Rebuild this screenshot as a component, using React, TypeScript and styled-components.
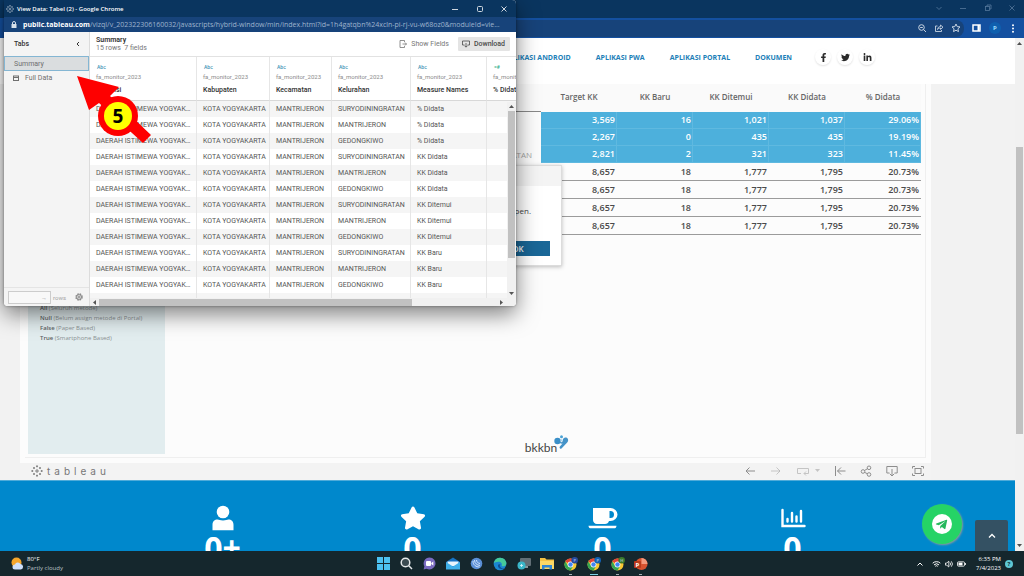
import React from "react";
import styled, { createGlobalStyle } from "styled-components";
import { FaFacebookF, FaTwitter, FaLinkedinIn, FaStar, FaTelegramPlane } from "react-icons/fa";

const Global = createGlobalStyle`
  * { box-sizing: border-box; }
  body { margin: 0; font-family: "Open Sans", "Noto Sans", sans-serif; }
  button, input { font: inherit; color: inherit; margin: 0; }
  button { border: 0; padding: 0; background: none; display: flex; align-items: center; justify-content: center; }
  a { color: inherit; text-decoration: none; }
  svg { display: block; flex: none; }
  table { border-collapse: separate; border-spacing: 0; table-layout: fixed; }
  td, th { padding: 0; }
`;

const Desktop = styled.div`
  position: relative;
  display: flex;
  flex-direction: column;
  height: 100vh;
  overflow: hidden;
  background: #f2f2f2;
`;

/* ---------- Main browser window ---------- */
const TitleBar = styled.header`
  display: flex;
  justify-content: flex-end;
  align-items: center;
  gap: 15px;
  height: 18px;
  padding: 0 8px 3px 0;
  background: #0a355f;
  color: #55789c;
`;
const ToolBar = styled.div`
  display: flex;
  align-items: center;
  height: 20px;
  padding: 1px 7px 1px 12px;
  gap: 8px;
  background: #1450a0;
  color: #fff;
`;
const Omnibox = styled.div`
  flex: 1;
  display: flex;
  justify-content: flex-end;
  align-items: center;
  gap: 7px;
  height: 17px;
  padding-right: 3px;
  border-radius: 8px;
  background: #17437a;
  color: #c8d4e2;
`;
const Profile = styled.button`
  width: 12px;
  height: 12px;
  border-radius: 50%;
  background: #0f5fae;
  color: #9fdcff;
  font-size: 6px;
  font-weight: 700;
`;
const Viewport = styled.div`
  flex: 1;
  min-height: 0;
  display: flex;
`;
const Page = styled.main`
  position: relative;
  flex: 1;
  min-width: 0;
  display: flex;
  flex-direction: column;
`;
const ScrollTrack = styled.div`
  display: flex;
  flex-direction: column;
  align-items: stretch;
  width: 9px;
  padding: 3px 1px;
  background: #f1f1f1;
  color: #505050;
  svg { align-self: center; }
`;
const Thumb = styled.div<{ $before: number; $size: number }>`
  flex: ${(p) => p.$size} 0 0;
  margin-top: ${(p) => p.$before}px;
  background: #c1c1c1;
`;
const Spring = styled.div<{ $grow?: number }>`
  flex: ${(p) => p.$grow ?? 1} 0 0;
`;
const Nav = styled.nav`
  display: flex;
  justify-content: flex-end;
  align-items: center;
  gap: 23px;
  height: 46px;
  padding: 0 140px 8px 0;
  background: #fff;
`;
const NavLinks = styled.div`
  display: flex;
  gap: 25px;
`;
const NavLink = styled.a`
  color: #1c80b8;
  font-size: 7px;
  font-weight: 700;
  white-space: nowrap;
`;
const Social = styled.div`
  display: flex;
  gap: 6px;
`;
const SocialLink = styled.a`
  display: flex;
  align-items: center;
  justify-content: center;
  width: 16px;
  height: 16px;
  border-radius: 50%;
  color: #2b2b2b;
  box-shadow: 0 1px 2px rgba(0, 0, 0, 0.12);
`;
const Embed = styled.section`
  flex: 1;
  min-height: 0;
  display: flex;
  flex-direction: column;
  margin: 0 84px 0 20px;
  background: #fcfcfc;
`;
const Dashboard = styled.div`
  flex: 1;
  min-height: 0;
  display: flex;
  margin: 0 5px 5px;
  padding: 0 4px 3px 3px;
  border: solid #efefef;
  border-width: 0 1px 1px 0;
`;
const FilterPanel = styled.aside`
  display: flex;
  flex-direction: column;
  justify-content: flex-end;
  width: 137px;
  padding: 0 0 111px 12px;
  background: #e2edef;
`;
const FilterLine = styled.p`
  margin: 0;
  height: 10px;
  line-height: 10px;
  font-size: 6px;
  color: #8a9193;
  white-space: nowrap;
  b { color: #5b6163; font-weight: 600; }
`;
const Sheet = styled.div`
  flex: 1;
  display: flex;
  flex-direction: column;
  align-items: center;
  justify-content: space-between;
`;
const Summary = styled.table`
  width: 100%;
  font-size: 9px;
  font-weight: 600;
  color: #4a4a4a;
  col { width: 76px; }
  col:first-child { width: auto; }
  thead th {
    height: 28px;
    padding-bottom: 3px;
    font-size: 8px;
    font-weight: 600;
    color: #666;
    background: #fafafa;
  }
  thead th:first-child { border-bottom: 1px solid #888; }
`;
const Name = styled.th`
  padding-right: 9px;
  font-size: 8px;
  font-weight: 400;
  color: #a5a5a5;
  text-align: right;
`;
const Value = styled.td<{ $marked?: boolean }>`
  height: ${(p) => (p.$marked ? 17 : 18)}px;
  line-height: 16px;
  padding-right: ${(p) => (p.$marked ? 1 : 2)}px;
  text-align: right;
  color: ${(p) => (p.$marked ? "#fff" : "inherit")};
  background: ${(p) => (p.$marked ? "#4db0dc" : "transparent")};
  border-style: solid;
  border-color: ${(p) => (p.$marked ? "#5fb9e0" : "#9b9b9b")};
  border-width: ${(p) => (p.$marked ? "0 1px 1px 0" : "0 0 1px 0")};
`;
const Logo = styled.div`
  display: flex;
  align-items: flex-end;
  margin-left: 8px;
  font-family: Lato, "Open Sans", sans-serif;
  font-size: 12px;
  line-height: 13px;
  color: #444;
  svg { margin: 0 0 5px -3px; }
`;
const VizBar = styled.footer`
  display: flex;
  align-items: center;
  justify-content: space-between;
  height: 17px;
  padding: 0 7px 2px 11px;
  background: #f3f3f3;
  color: #8d8d8d;
`;
const Wordmark = styled.a`
  display: flex;
  align-items: center;
  gap: 4px;
  font-family: Inter, "Open Sans", sans-serif;
  font-size: 10px;
  line-height: 14px;
  color: #777;
`;
const Letters = styled.span`
  display: flex;
  gap: 4px;
`;
const VizTools = styled.div`
  display: flex;
  align-items: center;
  gap: 14px;
`;
const Replay = styled.div`
  display: flex;
  gap: 5px;
  opacity: 0.45;
`;
const Stats = styled.section`
  display: flex;
  justify-content: center;
  height: 71px;
  overflow: hidden;
  background: #0088cc;
  border-top: 1px solid #4fabd9;
  color: #fff;
`;
const Stat = styled.div`
  display: flex;
  flex-direction: column;
  align-items: center;
  width: 190px;
  padding-top: 24px;
  font-size: 32px;
  font-weight: 700;
  line-height: 34px;
`;
const Telegram = styled.a`
  position: absolute;
  right: 53px;
  bottom: 7px;
  display: flex;
  align-items: center;
  justify-content: center;
  width: 40px;
  height: 40px;
  border-radius: 50%;
  background: #25d366;
  box-shadow: 1px 1px 2px #8a9a9a;
`;
const Disc = styled.span`
  display: flex;
  align-items: center;
  justify-content: center;
  width: 20px;
  height: 20px;
  padding-right: 1px;
  border-radius: 50%;
  background: #fff;
  color: #25b85c;
`;
const ToTop = styled.button`
  position: absolute;
  right: 7px;
  bottom: 0;
  width: 33px;
  height: 31px;
  border-radius: 2px 2px 0 0;
  background: #345163;
  color: #fff;
`;

/* ---------- Export dialog behind the popup ---------- */
const Dialog = styled.section`
  position: absolute;
  left: 400px;
  top: 165px;
  width: 162px;
  background: #fff;
  border: 1px solid #dcdcdc;
  box-shadow: 0 1px 4px rgba(0, 0, 0, 0.25);
  color: #444;
  font-size: 8px;
`;
const DialogHead = styled.div`
  height: 20px;
  background: #f4f4f4;
`;
const DialogText = styled.p`
  margin: 0;
  padding: 19px 30px 24px 0;
  line-height: 12px;
  text-align: right;
`;
const DialogOk = styled.button`
  width: 64px;
  height: 15px;
  margin: 0 11px 9px auto;
  background: #1a6797;
  color: #fff;
  font-weight: 600;
`;

/* ---------- View Data popup window ---------- */
const Popup = styled.section`
  position: absolute;
  left: 4px;
  top: 0;
  width: 512px;
  overflow: hidden;
  border-radius: 0 4px 4px 4px;
  background: #fff;
  color: #555;
  font-size: 7px;
`;
const PopupShadow = styled.div`
  position: absolute;
  left: 4px;
  top: 0;
  width: 512px;
  height: 306px;
  border-radius: 4px;
  box-shadow: 0 8px 22px rgba(0, 0, 0, 0.5), 0 0 3px rgba(0, 0, 0, 0.4);
`;
const PopupTitle = styled.header`
  display: flex;
  align-items: center;
  gap: 3px;
  height: 17px;
  padding: 0 9px 0 2px;
  background: #0a355f;
  color: #fff;
  font-size: 6px;
  font-weight: 600;
  svg { opacity: 0.8; }
`;
const WindowControls = styled.div`
  display: flex;
  gap: 17px;
  margin-left: auto;
`;
const PopupUrl = styled.div`
  display: flex;
  align-items: center;
  gap: 6px;
  height: 15px;
  padding: 0 7px;
  background: #17437a;
  color: #9fb4cd;
  white-space: nowrap;
  b { color: #fff; font-weight: 700; }
`;
const PopupBody = styled.div`
  display: grid;
  grid-template: minmax(0, 1fr) / 86px minmax(0, 1fr);
  height: 274px;
  font-family: Roboto, "Open Sans", sans-serif;
`;
const Tabs = styled.aside`
  display: flex;
  flex-direction: column;
  background: #f4f4f4;
  border-right: 1px solid #dcdcdc;
`;
const TabsHead = styled.div`
  display: flex;
  align-items: center;
  justify-content: space-between;
  height: 24px;
  padding: 0 8px 0 10px;
  font-weight: 500;
  color: #333;
`;
const Tab = styled.button<{ $active?: boolean }>`
  justify-content: flex-start;
  gap: 6px;
  height: ${(p) => (p.$active ? 15 : 14)}px;
  padding-left: 9px;
  color: #6f6f6f;
  background: ${(p) => (p.$active ? "#dadddf" : "transparent")};
  border: ${(p) => (p.$active ? "1px solid #84b6d3" : "0")};
`;
const RowsBar = styled.div`
  display: flex;
  align-items: center;
  height: 19px;
  margin-top: auto;
  padding: 0 6px 0 4px;
  border-top: 1px solid #e4e4e4;
  font-size: 6px;
  color: #a5a5a5;
  label { display: flex; align-items: center; gap: 2px; }
  svg { margin-left: auto; }
`;
const RowsInput = styled.input`
  width: 43px;
  height: 13px;
  padding: 0 3px;
  border: 1px solid #ccc;
  background: #f8f8f8;
  text-align: right;
  &::placeholder { color: #999; opacity: 1; }
`;
const DataPane = styled.div`
  position: relative;
  display: flex;
  flex-direction: column;
  min-width: 0;
`;
const PaneHead = styled.div`
  display: flex;
  align-items: center;
  gap: 4px;
  height: 25px;
  padding: 0 6px;
  border-bottom: 1px solid #e2e2e2;
`;
const Heading = styled.div`
  flex: 1;
  line-height: 8px;
  color: #777;
  strong { display: block; font-weight: 600; color: #333; }
`;
const PaneButton = styled.button<{ $filled?: boolean }>`
  gap: 4px;
  height: 14px;
  padding: 0 5px 0 4px;
  border-radius: 1px;
  font-weight: ${(p) => (p.$filled ? 500 : 400)};
  color: ${(p) => (p.$filled ? "#4a4a4a" : "#777")};
  background: ${(p) => (p.$filled ? "#e4e4e4" : "transparent")};
`;
const TableClip = styled.div`
  flex: 1;
  min-height: 0;
  overflow: hidden;
`;
const Data = styled.table`
  width: 100%;
  th, td {
    padding-left: 6px;
    border-right: 1px solid #e6e6e6;
    text-align: left;
    white-space: nowrap;
    overflow: hidden;
  }
  th {
    height: 44px;
    line-height: 10px;
    font-weight: 500;
    color: #333;
    border-bottom: 1px solid #d8d8d8;
  }
  td { height: 16px; line-height: 14px; text-overflow: ellipsis; }
  td:first-child { padding-right: 4px; }
  tbody tr:nth-child(odd) { background: #f5f5f5; }
  th:last-child, td:last-child { border-right: 0; }
`;
const FieldType = styled.span<{ $measure?: boolean }>`
  display: block;
  height: 10px;
  padding-left: 1px;
  font-size: 5px;
  font-weight: 500;
  color: ${(p) => (p.$measure ? "#2fae8a" : "#3f93b5")};
`;
const Source = styled.span`
  display: block;
  height: 13px;
  font-size: 6px;
  font-weight: 400;
  color: #8c8c8c;
`;
const VScroll = styled.div`
  position: absolute;
  top: 70px;
  right: 0;
  bottom: 8px;
  display: flex;
  flex-direction: column;
  align-items: center;
  width: 9px;
  padding: 2px 1px;
  background: #f1f1f1;
  color: #555;
`;
const VThumb = styled.div`
  width: 7px;
  height: 147px;
  margin: 2px 0 auto;
  background: #c1c1c1;
`;
const HScroll = styled.div`
  display: flex;
  align-items: center;
  height: 8px;
  padding: 0 12px 0 2px;
  background: #f1f1f1;
  color: #555;
`;
const HThumb = styled.div`
  width: 313px;
  height: 7px;
  margin: 0 auto 0 2px;
  background: #c1c1c1;
`;
const Callout = styled.svg`
  position: absolute;
  left: 74px;
  top: 73px;
`;

/* ---------- Taskbar ---------- */
const Taskbar = styled.footer`
  display: grid;
  grid-template-columns: 1fr 272px 1fr;
  align-items: center;
  height: 25px;
  padding: 0 11px;
  background: #15272d;
  color: #fff;
  font-size: 6px;
  line-height: 9px;
`;
const Weather = styled.button`
  justify-self: start;
  gap: 3px;
  text-align: left;
  span { color: #b9c3c6; }
`;
const Apps = styled.div`
  display: flex;
  justify-content: space-between;
`;
const TaskApp = styled.button<{ $line?: "dot" | "bar" }>`
  position: relative;
  width: 14px;
  height: 22px;
  &::after {
    content: "";
    position: absolute;
    bottom: 0;
    width: ${(p) => (p.$line === "bar" ? 8 : p.$line ? 3 : 0)}px;
    height: 1px;
    background: ${(p) => (p.$line === "bar" ? "#7fd0e6" : "#a4b0b4")};
  }
`;
const Tray = styled.div`
  display: flex;
  align-items: center;
  justify-content: flex-end;
  gap: 4px;
`;
const Clock = styled.div`
  margin-left: 6px;
  text-align: right;
`;
const Help = styled.span`
  width: 8px;
  height: 8px;
  border-radius: 50%;
  background: #5fc7d3;
  color: #10343a;
  font-weight: 700;
  line-height: 8px;
  text-align: center;
`;

type IcoProps = { w: number; h?: number; sw?: number; children: React.ReactNode };
const Ico = ({ w, h = w, sw = 1, children }: IcoProps) => (
  <svg width={w} height={h} viewBox={`0 0 ${w} ${h}`} fill="none" stroke="currentColor" strokeWidth={sw} aria-hidden="true">
    {children}
  </svg>
);
const Tri = ({ d }: { d: string }) => (
  <svg width="5" height="5" viewBox="0 0 5 5" fill="currentColor" aria-hidden="true"><path d={d} /></svg>
);
const UP = "M0 4L2.5 1 5 4z";
const DOWN = "M0 1L2.5 4 5 1z";
const LEFT = "M4 0L1 2.5 4 5z";
const RIGHT = "M1 0L4 2.5 1 5z";

const Sparkle = ({ w }: { w: number }) => (
  <svg width={w} height={w} viewBox="0 0 12 12" stroke="currentColor" strokeWidth=".9" fill="none" aria-hidden="true">
    <path d="M6 4v4M4 6h4M6 .3v2M5 1.3h2M6 9.7v2M5 10.7h2M.3 6h2M1.3 5v2M9.7 6h2M10.7 5v2M3 2v2M2 3h2M9 2v2M8 3h2M3 8v2M2 9h2M9 8v2M8 9h2" />
  </svg>
);

const Chrome = ({ badge, letter }: { badge: string; letter: string }) => (
  <svg width="14" height="14" viewBox="0 0 14 14" aria-hidden="true">
    <circle cx="6.5" cy="7.5" r="6" fill="#f8c832" />
    <path d="M6.500 7.500L1.300 4.500A6 6 0 0 1 11.700 4.500L6.500 4.700z" fill="#e2443a" />
    <path d="M1.300 4.500A6 6 0 0 0 6.500 13.500L9 9.200 6.500 7.500 4 8.800z" fill="#35a653" />
    <circle cx="6.500" cy="7.500" r="2.900" fill="#fff" />
    <circle cx="6.500" cy="7.500" r="2.200" fill="#4285f4" />
    <circle cx="10.700" cy="3.300" r="3.300" fill={badge} />
    <text x="10.700" y="5" fontSize="4" textAnchor="middle" fill="#d9e8ff">{letter}</text>
  </svg>
);

const taskApps: { name: string; line?: "dot" | "bar"; icon: React.ReactNode }[] = [
  { name: "Start", icon: <svg width="13" height="13" viewBox="0 0 13 13" fill="#4cc2f1"><path d="M0 0h6v6H0zM7 0h6v6H7zM0 7h6v6H0zM7 7h6v6H7z" /></svg> },
  { name: "Search", icon: <svg width="13" height="13" viewBox="0 0 13 13" fill="#3c4c52" stroke="#e6e9ea" strokeWidth="1.500"><circle cx="5.500" cy="5.500" r="4.300" /><path d="M8.800 8.800l3.200 3.200" /></svg> },
  { name: "Chat", icon: <svg width="13" height="13" viewBox="0 0 13 13"><path d="M6.500.5a6 6 0 1 1-3 11.200L.6 12.500l.8-3A6 6 0 0 1 6.500.5z" fill="#7a6bc0" /><rect x="3" y="4" width="5" height="5" rx="1" fill="#fff" /><path d="M8.300 6l2-1.500v4l-2-1.500z" fill="#fff" /></svg> },
  { name: "Mail", icon: <svg width="14" height="13" viewBox="0 0 14 13"><path d="M0 5l7-4.500L14 5v7H0z" fill="#1673c4" /><path d="M1.500 4.500h11V9h-11z" fill="#e9f5fd" /><path d="M0 5l7 4.500L14 5v7.500H0z" fill="#3fb0ea" /></svg> },
  { name: "Phone", icon: <svg width="13" height="13" viewBox="0 0 13 13"><circle cx="6.500" cy="6.500" r="5.800" fill="#5b8fd6" /><path d="M3 4c0 4 3 6 6.500 6M4.500 3c0 3.500 2.500 5 5.500 5.500M6.500 3c0 2 1.500 3.200 3.500 3.500" stroke="#dcebff" fill="none" strokeWidth=".9" /></svg> },
  { name: "Edge", icon: <svg width="14" height="14" viewBox="0 0 14 14"><circle cx="7" cy="7" r="6.300" fill="#1b86d0" /><path d="M.8 6.200C1.500 2.500 4 .7 7 .7c4 0 6.400 3 6.400 5.600 0 2-1.400 3-3 3-1.200 0-2-.4-1.700-1C9.500 6.500 8 4.700 5.600 4.700 3.300 4.700 1.300 5.500.8 6.200z" fill="#45c99a" /><path d="M5 8c-.5 2 1.500 4.300 4.500 4.200 1.200 0 2-.5 2.500-1-1.500.5-3.500.2-4.500-1C6.800 9.300 7 8 7.500 7.500 6.500 7 5.300 7 5 8z" fill="#0d4f96" /></svg> },
  { name: "Remote", icon: <svg width="14" height="14" viewBox="0 0 14 14"><rect x="3" y="1" width="11" height="8" rx="1" fill="#626f76" /><path d="M8 9h3v2H8z" fill="#8a969b" /><circle cx="4.500" cy="8.500" r="4" fill="#3ab6c9" /><path d="M3 8.500h3M4.500 7v3" stroke="#d9f6fa" strokeWidth=".8" /></svg> },
  { name: "Files", icon: <svg width="14" height="13" viewBox="0 0 14 13"><path d="M0 1h5l1.500 1.500H14V12H0z" fill="#f4c243" /><path d="M0 4h14v8H0z" fill="#fbd865" /><path d="M2 8h10v4.500H9.500v-2h-5v2H2z" fill="#2f86d2" /></svg> },
  { name: "Chrome", line: "dot", icon: <Chrome badge="#274a9e" letter="P" /> },
  { name: "Chrome work", line: "bar", icon: <Chrome badge="#1262b5" letter="P" /> },
  { name: "Chrome home", line: "dot", icon: <Chrome badge="#3b7a2b" letter="H" /> },
  { name: "PowerPoint", line: "dot", icon: <svg width="14" height="14" viewBox="0 0 14 14"><circle cx="7.500" cy="7" r="6" fill="#d9532f" /><path d="M7.500 1a6 6 0 0 1 6 6h-6z" fill="#f49a7c" /><rect x="0" y="4" width="7" height="7" rx="1" fill="#b93a1c" /><text x="3.500" y="9.500" fontSize="6" fontWeight="700" textAnchor="middle" fill="#fff">P</text></svg> },
];

const marked = [
  ["", "3,569", "16", "1,021", "1,037", "29.06%"],
  ["", "2,267", "0", "435", "435", "19.19%"],
  ["SURYODININGRATAN", "2,821", "2", "321", "323", "11.45%"],
];
const total = ["8,657", "18", "1,777", "1,795", "20.73%"];

const fields = ["Provinsi", "Kabupaten", "Kecamatan", "Kelurahan", "Measure Names"];
const villages = ["SURYODININGRATAN", "MANTRIJERON", "GEDONGKIWO"];
const measures = ["% Didata", "KK Didata", "KK Ditemui", "KK Baru"];
const dataRows = measures.flatMap((m) =>
  villages.map((v) => ["DAERAH ISTIMEWA YOGYAKARTA", "KOTA YOGYAKARTA", "MANTRIJERON", v, m, ""])
);

function BrowserChrome() {
  return (
    <>
      <TitleBar>
        <button aria-label="Search tabs"><Ico w={8} sw={0.8}><path d="M1.500 3L4 5.500 6.500 3" /></Ico></button>
        <button aria-label="Minimise"><Ico w={10} h={8} sw={0.8}><path d="M2 4.500h6" /></Ico></button>
        <button aria-label="Restore"><Ico w={10} h={8} sw={0.8}><rect x="2.500" y="2.500" width="4" height="4" /><path d="M4 2.500V1h4v4H6.500" /></Ico></button>
        <button aria-label="Close"><Ico w={8} sw={0.8}><path d="M1.500 1.500l5 5M6.500 1.500l-5 5" /></Ico></button>
      </TitleBar>
      <ToolBar>
        <Omnibox>
          <button aria-label="Zoom"><Ico w={10}><circle cx="4.500" cy="4.500" r="2.800" /><path d="M6.500 6.500L9 9M3.200 4.500h2.600" /></Ico></button>
          <button aria-label="Share"><Ico w={10} sw={0.9}><path d="M3.500 3H1.500v5.500h6V7M3.500 6.500c.3-2 1.500-3 3-3V2l2.500 2.200-2.500 2.200V5c-1.200 0-2.200.4-3 1.500z" /></Ico></button>
          <button aria-label="Bookmark"><Ico w={10}><path d="M5 1l1.200 2.600 2.800.3L6.900 5.800l.6 2.800L5 7.200 2.500 8.600l.6-2.800L1 3.900l2.800-.3z" /></Ico></button>
        </Omnibox>
        <button aria-label="Side panel"><Ico w={9} h={8} sw={1.5}><rect x="1" y="1" width="7" height="6" /><path d="M6.500 1v6" strokeWidth="2" /></Ico></button>
        <Profile>P</Profile>
        <button aria-label="Menu"><svg width="8" height="9" viewBox="0 0 8 9" fill="currentColor"><circle cx="4" cy="1.300" r="1" /><circle cx="4" cy="4.500" r="1" /><circle cx="4" cy="7.700" r="1" /></svg></button>
      </ToolBar>
    </>
  );
}

function TableauEmbed() {
  return (
    <Embed>
      <Dashboard>
        <FilterPanel>
          <FilterLine><b>All</b> (Seluruh metode)</FilterLine>
          <FilterLine><b>Null</b> (Belum assign metode di Portal)</FilterLine>
          <FilterLine><b>False</b> (Paper Based)</FilterLine>
          <FilterLine><b>True</b> (Smartphone Based)</FilterLine>
        </FilterPanel>
        <Sheet>
          <Summary>
            <colgroup><col /><col /><col /><col /><col /><col /></colgroup>
            <thead>
              <tr><th /><th>Target KK</th><th>KK Baru</th><th>KK Ditemui</th><th>KK Didata</th><th>% Didata</th></tr>
            </thead>
            <tbody>
              {marked.map(([name, ...values], i) => (
                <tr key={i}><Name>{name}</Name>{values.map((v, j) => <Value $marked key={j}>{v}</Value>)}</tr>
              ))}
              {[0, 1, 2, 3].map((i) => (
                <tr key={i}><Value />{total.map((v, j) => <Value key={j}>{v}</Value>)}</tr>
              ))}
            </tbody>
          </Summary>
          <Logo>
            bkkbn
            <svg width="15" height="14" viewBox="0 0 15 14" aria-hidden="true">
              <circle cx="3.500" cy="6" r="3.200" fill="#3a8fc8" />
              <circle cx="7.500" cy="1.800" r="1.500" fill="#4ba3d6" />
              <path d="M5.500 6.500c2 1.500 3 .5 3.300-1C9 3 10.500 2.300 12 2.600c2.500.5 2.700 3.400 1.200 5L7.500 13.500c-1.300.8-2.500-.7-1.600-1.900l2.600-3C7 9 6 8.500 5.500 6.500z" fill="#4593c8" />
              <circle cx="7.500" cy="5.300" r="1.100" fill="#a9d5ee" />
            </svg>
          </Logo>
        </Sheet>
      </Dashboard>
      <VizBar>
        <Wordmark href="#tableau" aria-label="tableau">
          <Sparkle w={12} />
          <Letters>{[..."tableau"].map((c, i) => <span key={i}>{c}</span>)}</Letters>
        </Wordmark>
        <VizTools>
          <button aria-label="Undo"><Ico w={12}><path d="M11 6H2M5.500 2.500L2 6l3.500 3.500" /></Ico></button>
          <button aria-label="Redo"><Ico w={12}><g opacity=".45"><path d="M1 6h9M6.500 2.500L10 6 6.500 9.500" /></g></Ico></button>
          <Replay>
            <button aria-label="Replay"><Ico w={14} h={12}><path d="M5 8.500H1.500v-5h11v5H8M10 6.500l-2 2 2 2" /></Ico></button>
            <button aria-label="Replay speed"><Tri d={DOWN} /></button>
          </Replay>
          <button aria-label="Revert"><Ico w={12}><path d="M1.500 1v10M11.500 6H3.500M7 2.500L3.500 6 7 9.500" /></Ico></button>
          <button aria-label="Share"><Ico w={12}><circle cx="3" cy="6.500" r="1.800" /><circle cx="9" cy="2.800" r="1.800" /><circle cx="9" cy="9.500" r="1.800" /><path d="M4.500 5.500l3-1.800M4.500 7.300l3 1.500" /></Ico></button>
          <button aria-label="Download"><Ico w={12}><path d="M3.500 8h-2.700V1.500h10.400V8H8.500M6 4v7M3.800 8.800L6 11l2.200-2.200" /></Ico></button>
          <button aria-label="Full screen"><Ico w={12}><rect x="3" y="3.500" width="6" height="5" /><path d="M.5 3.500v-2h2.500M9 1.500h2.500v2M.5 8.500v2h2.500M9 10.500h2.500v-2" /></Ico></button>
        </VizTools>
      </VizBar>
    </Embed>
  );
}

function StatsBand() {
  return (
    <Stats>
      <Stat>
        <svg width="22" height="26" viewBox="0 0 22 26" fill="currentColor"><circle cx="11" cy="7" r="6.300" /><path d="M0.500 25.300v-5.500c0-3.500 2.300-5.300 5-5.300 1.700 0 2.500 1 5.500 1s3.800-1 5.500-1c2.700 0 5 1.800 5 5.300v5.500z" /></svg>
        0+
      </Stat>
      <Stat><FaStar size={26} />0</Stat>
      <Stat>
        <svg width="30" height="26" viewBox="0 0 30 26" fill="currentColor"><path d="M5 3h17.500a7 6.500 0 0 1 0 13H21c-.5 1.800-2 3-4 3H9c-2.300 0-4-1.700-4-4zM21.500 6v7h1a3.500 3.500 0 0 0 0-7zM.5 20.700h28c0 1.600-1 2.600-2.500 2.600H3c-1.500 0-2.500-1-2.500-2.600z" fillRule="evenodd" /></svg>
        0
      </Stat>
      <Stat>
        <svg width="26" height="26" viewBox="0 0 26 26" fill="none" stroke="currentColor" strokeWidth="2.400" strokeLinecap="round"><path d="M2.500 5v16H24.500M7.500 16.500v-2.500M12 16.500V8M16.500 16.500v-5M21 16.500V6" /></svg>
        0
      </Stat>
    </Stats>
  );
}

function ViewData() {
  return (
    <Popup aria-label="View Data">
      <PopupTitle>
        <Sparkle w={8} />
        View Data: Tabel (2) - Google Chrome
        <WindowControls>
          <button aria-label="Minimise"><Ico w={8}><path d="M1 4.500h6" /></Ico></button>
          <button aria-label="Maximise"><Ico w={8}><rect x="1.500" y="1.500" width="5" height="5" rx="1" /></Ico></button>
          <button aria-label="Close"><Ico w={6}><path d="M.5.5l5 5M5.500.5l-5 5" /></Ico></button>
        </WindowControls>
      </PopupTitle>
      <PopupUrl>
        <svg width="6" height="7" viewBox="0 0 6 7" fill="#d7e0ea"><path d="M.5 3h5v4h-5z" /><path d="M1.500 3V2a1.500 1.500 0 0 1 3 0v1" fill="none" stroke="#d7e0ea" /></svg>
        <span><b>public.tableau.com</b>/vizql/v_202322306160032/javascripts/hybrid-window/min/index.html?id=1h4gatqbn%24xcln-pi-rj-vu-w68oz0&amp;moduleId=vie...</span>
      </PopupUrl>
      <PopupBody>
        <Tabs>
          <TabsHead>Tabs<button aria-label="Collapse"><Ico w={6}><path d="M4 1L2 3l2 2" /></Ico></button></TabsHead>
          <Tab $active>Summary</Tab>
          <Tab><Ico w={6}><rect x=".5" y="1" width="5" height="4.500" /><path d="M.5 2.500h5" /></Ico>Full Data</Tab>
          <RowsBar>
            <label><RowsInput placeholder="→" />rows</label>
            <svg width="8" height="8" viewBox="0 0 8 8" fill="none" stroke="#8b8b8b"><circle cx="4" cy="4" r="3" strokeWidth="1.500" strokeDasharray="1.600 .8" /><circle cx="4" cy="4" r="2.300" /><circle cx="4" cy="4" r=".8" /></svg>
          </RowsBar>
        </Tabs>
        <DataPane>
          <PaneHead>
            <Heading><strong>Summary</strong>15 rows&nbsp; 7 fields</Heading>
            <PaneButton><Ico w={8} sw={0.8}><path d="M5.500 2V.5H1v7h4.500V6M3.500 4h4M6 2.500L7.500 4 6 5.500" /></Ico>Show Fields</PaneButton>
            <PaneButton $filled><Ico w={8} sw={0.8}><path d="M2.500 5H.5V1h7v4h-2M4 3v4M2.500 5.700L4 7.200l1.500-1.500" /></Ico>Download</PaneButton>
          </PaneHead>
          <TableClip>
            <Data>
              <colgroup><col width="107" /><col width="73" /><col width="62" /><col width="79" /><col width="76" /><col /></colgroup>
              <thead>
                <tr>
                  {fields.map((f) => <th key={f}><FieldType>Abc</FieldType><Source>fa_monitor_2023</Source>{f}</th>)}
                  <th><FieldType $measure>=#</FieldType><Source>fa_monitor_2023</Source>% Didata</th>
                </tr>
              </thead>
              <tbody>
                {dataRows.map((r, i) => <tr key={i}>{r.map((c, j) => <td key={j}>{c}</td>)}</tr>)}
                <tr>{fields.map((f) => <td key={f} />)}<td /></tr>
              </tbody>
            </Data>
          </TableClip>
          <VScroll><Tri d={UP} /><VThumb /><Tri d={DOWN} /></VScroll>
          <HScroll><Tri d={LEFT} /><HThumb /><Tri d={RIGHT} /></HScroll>
        </DataPane>
      </PopupBody>
    </Popup>
  );
}

export default function App() {
  return (
    <Desktop>
      <Global />
      <BrowserChrome />
      <Viewport>
        <Page>
          <Nav>
            <NavLinks>
              <NavLink href="#android">APLIKASI ANDROID</NavLink>
              <NavLink href="#pwa">APLIKASI PWA</NavLink>
              <NavLink href="#portal">APLIKASI PORTAL</NavLink>
              <NavLink href="#dokumen">DOKUMEN</NavLink>
            </NavLinks>
            <Social>
              <SocialLink href="#facebook" aria-label="Facebook"><FaFacebookF size={9} /></SocialLink>
              <SocialLink href="#twitter" aria-label="Twitter"><FaTwitter size={9} /></SocialLink>
              <SocialLink href="#linkedin" aria-label="LinkedIn"><FaLinkedinIn size={9} /></SocialLink>
            </Social>
          </Nav>
          <TableauEmbed />
          <StatsBand />
          <Telegram href="#telegram" aria-label="Telegram"><Disc><FaTelegramPlane size={13} /></Disc></Telegram>
          <ToTop aria-label="Back to top"><Ico w={8} sw={1.3}><path d="M1 5.500l3-3 3 3" /></Ico></ToTop>
        </Page>
        <ScrollTrack><Tri d={UP} /><Thumb $before={101} $size={287} /><Spring $grow={109} /><Tri d={DOWN} /></ScrollTrack>
      </Viewport>
      <Dialog aria-label="Export">
        <DialogHead />
        <DialogText>open.</DialogText>
        <DialogOk>OK</DialogOk>
      </Dialog>
      <PopupShadow />
      <ViewData />
      <Callout width="80" height="72" viewBox="0 0 80 72" aria-label="Step 5">
        <path d="M3 3l42 11-9 9 41 39-8 8-44-40-10 7z" fill="#fe0000" />
        <circle cx="44" cy="43" r="20" fill="#fe0000" />
        <circle cx="44" cy="43" r="14" fill="#ffff00" />
        <text x="44" y="50" fontSize="19" fontWeight="700" textAnchor="middle" fill="#000">5</text>
      </Callout>
      <Taskbar>
        <Weather>
          <svg width="13" height="13" viewBox="0 0 13 13"><circle cx="5.500" cy="5.500" r="5" fill="#f5a62b" /><path d="M4 12.500a2.500 2.500 0 0 1 0-5 3 3 0 0 1 5.500-.5 2.800 2.800 0 0 1 .5 5.500z" fill="#cfe0fa" /></svg>
          <div>80°F<br /><span>Partly cloudy</span></div>
        </Weather>
        <Apps>
          {taskApps.map((a) => <TaskApp key={a.name} $line={a.line} aria-label={a.name}>{a.icon}</TaskApp>)}
        </Apps>
        <Tray>
          <Ico w={8}><path d="M1.500 5.500L4 3l2.500 2.500" /></Ico>
          <Spring $grow={0} />
          <Ico w={9} h={8}><path d="M.7 3.200a5.500 5.500 0 0 1 7.600 0M2 4.900a3.600 3.600 0 0 1 5 0M3.300 6.300a1.700 1.700 0 0 1 2.400 0" /></Ico>
          <Ico w={8} sw={0.8}><path d="M.5 3v2.200h1.300L3.800 7V1.200L1.800 3zM5 2.500a2 2 0 0 1 0 3M6.300 1.300a4 4 0 0 1 0 5.400" /></Ico>
          <Ico w={9} h={6} sw={0.8}><rect x=".5" y=".8" width="7" height="4.400" rx="1" /><path d="M1.500 3h4" strokeWidth="2.800" /><path d="M8.500 2v2" /></Ico>
          <Clock>6:35 PM<br />7/4/2023</Clock>
          <Help>?</Help>
        </Tray>
      </Taskbar>
    </Desktop>
  );
}
